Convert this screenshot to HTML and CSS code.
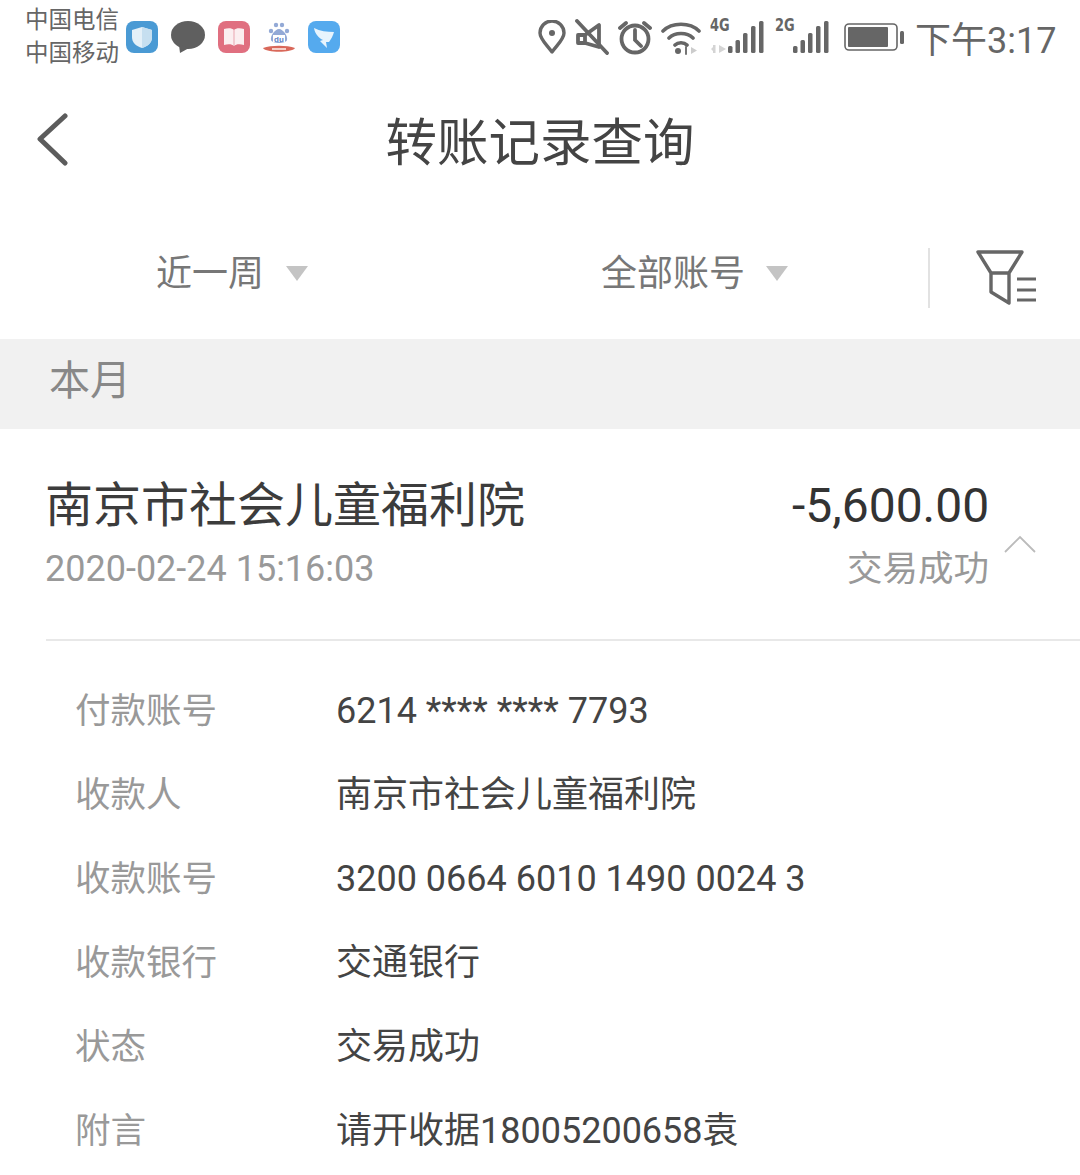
FILE: index.html
```html
<!DOCTYPE html>
<html lang="zh-CN">
<head>
  <meta charset="UTF-8">
  <title>转账记录查询</title>
  <link rel="stylesheet" href="styles.css">
</head>
<body>
  <div class="status-bar">
    <div class="carriers">
      <span>中国电信</span>
      <span>中国移动</span>
    </div>
    <div class="app-icons">
      <svg width="34" height="34" viewBox="0 0 34 34"><rect x="1" y="1" width="32" height="32" rx="8" fill="#4a9ad4"/><path d="M17 7l10 3v7c0 6-4 9-10 11C11 26 7 23 7 17v-7z" fill="#e4f0f8"/><path d="M17 7l10 3v7c0 6-4 9-10 11z" fill="#c6dff0"/></svg>
      <svg width="36" height="34" viewBox="0 0 36 34"><ellipse cx="18" cy="15" rx="17" ry="14" fill="#5f5f5f"/><path d="M9 25l1 8 9-5z" fill="#5f5f5f"/></svg>
      <svg width="34" height="34" viewBox="0 0 34 34"><rect x="1" y="1" width="32" height="32" rx="8" fill="#e06f80"/><path d="M7 9c4-1 8-1 10 1 2-2 6-2 10-1v16c-4-1-8-1-10 1-2-2-6-2-10-1z" fill="#fbeef0"/><path d="M17 10v16" stroke="#e9a5b0" stroke-width="1"/></svg>
      <svg width="34" height="36" viewBox="0 0 34 36"><g fill="#93a9d6"><circle cx="9" cy="12" r="2.200"/><circle cx="14" cy="6" r="2.200"/><circle cx="20" cy="6" r="2.200"/><circle cx="25" cy="12" r="2.200"/><path d="M17 10c4 0 9 7 8 11-1 4-15 4-16 0-1-4 4-11 8-11z"/></g><path d="M11 16h12v7H11z" fill="#fff"/><text class="du" x="17" y="22.500" text-anchor="middle">du</text><path d="M1 29c8-3 24-3 32 0-3 5-29 5-32 0z" fill="#d9685a"/><path d="M10 30h14" stroke="#f6d0c8" stroke-width="2"/></svg>
      <svg width="34" height="34" viewBox="0 0 34 34"><rect x="1" y="1" width="32" height="32" rx="8" fill="#55aaee"/><path d="M7 8c6 3 13 4 20 4-1 4-3 7-5 10h-3l1 6-7-7 3-1c-4-2-8-6-9-12z" fill="#e8f4fd"/></svg>
    </div>
    <div class="sys-icons">
      <svg width="28" height="34" viewBox="0 0 28 34" fill="none" stroke="#666" stroke-width="3.400"><path d="M14 32C8 24 2 19 2 13a12 12 0 0 1 24 0c0 6-6 11-12 19z" stroke-linejoin="round"/><circle cx="14" cy="13" r="3" fill="#666" stroke="none"/></svg>
      <svg width="34" height="36" viewBox="0 0 34 36" fill="none" stroke="#666" stroke-width="3.800"><path d="M3 16h7v8H3zM10 16l14-10v22L10 24" stroke-linejoin="round" fill="none"/><path d="M2 2l30 32" stroke-linecap="round"/></svg>
      <svg width="34" height="36" viewBox="0 0 34 36" fill="none" stroke="#666" stroke-width="3.800"><circle cx="17" cy="20" r="13.500"/><path d="M17 11v10l6 6M2 9l6-5M32 9l-6-5" stroke-linecap="round"/></svg>
      <svg width="40" height="36" viewBox="0 0 40 36" fill="none" stroke="#666" stroke-width="3.600" stroke-linecap="round"><path d="M2 12C11 3 29 3 38 12M8 19c6-6 18-6 24 0M14 26c3-3 9-3 12 0"/><circle cx="17" cy="32" r="3" fill="#666" stroke="none"/><path d="M25 28v7" stroke-width="1.800"/><path d="M30 28l6 3.500-6 3.500z" fill="#ccc" stroke="none"/></svg>
      <div class="signal">
        <span class="net">4G</span>
        <svg class="arrows" width="16" height="8" viewBox="0 0 16 8" fill="#d4d4d4"><rect x="2" y="0" width="2.500" height="8"/><path d="M0 4l3-3v6zM8 0l7 4-7 4z"/></svg>
        <svg width="36" height="34" viewBox="0 0 36 34" fill="#666"><rect x="0" y="26" width="4.500" height="7" rx="1.500"/><rect x="7.500" y="20" width="4.500" height="13" rx="1.500"/><rect x="15" y="13" width="4.500" height="20" rx="1.500"/><rect x="23" y="6" width="4.500" height="27" rx="1.500"/><rect x="31" y="1" width="4.500" height="32" rx="1.500"/></svg>
      </div>
      <div class="signal signal-2g">
        <span class="net">2G</span>
        <svg width="36" height="34" viewBox="0 0 36 34" fill="#666"><rect x="0" y="26" width="4.500" height="7" rx="1.500"/><rect x="7.500" y="20" width="4.500" height="13" rx="1.500"/><rect x="15" y="13" width="4.500" height="20" rx="1.500"/><rect x="23" y="6" width="4.500" height="27" rx="1.500"/><rect x="31" y="1" width="4.500" height="32" rx="1.500"/></svg>
      </div>
      <svg class="battery" width="62" height="30" viewBox="0 0 62 30"><rect x="1" y="2" width="52" height="26" rx="4" fill="none" stroke="#666" stroke-width="1.600"/><rect x="4" y="5" width="40" height="20" rx="1" fill="#666"/><rect x="56" y="9" width="4" height="13" rx="1.500" fill="#666"/></svg>
    </div>
    <div class="clock">下午3:17</div>
  </div>

  <header class="title-bar">
    <svg class="back" width="34" height="54" viewBox="0 0 34 54" fill="none" stroke="#5c5c5c" stroke-width="5" stroke-linecap="round" stroke-linejoin="round"><path d="M30 4L5 27l25 24"/></svg>
    <h1>转账记录查询</h1>
  </header>

  <div class="filters">
    <div class="filter filter-date"><span>近一周</span><i class="caret"></i></div>
    <div class="filter filter-account"><span>全部账号</span><i class="caret"></i></div>
    <div class="filter-btn">
      <svg width="62" height="58" viewBox="0 0 62 58" fill="none" stroke="#666" stroke-width="3.400" stroke-linejoin="round"><path d="M2 3h44L33 24H15zM15 24v19l18 11V24"/><path d="M41 30h19M41 41h19M41 51h19" stroke-width="3"/></svg>
    </div>
  </div>

  <div class="month">本月</div>

  <section class="record">
    <div class="record-head">
      <div class="record-left">
        <div class="payee">南京市社会儿童福利院</div>
        <div class="date">2020-02-24 15:16:03</div>
      </div>
      <div class="record-right">
        <div class="amount">-5,600.00</div>
        <div class="result">交易成功</div>
        <svg class="fold" width="32" height="18" viewBox="0 0 32 18" fill="none" stroke="#bbb" stroke-width="1.800"><path d="M1 17L16 2l15 15"/></svg>
      </div>
    </div>
    <dl class="details">
      <div class="row"><dt>付款账号</dt><dd>6214 **** **** 7793</dd></div>
      <div class="row"><dt>收款人</dt><dd>南京市社会儿童福利院</dd></div>
      <div class="row"><dt>收款账号</dt><dd>3200 0664 6010 1490 0024 3</dd></div>
      <div class="row"><dt>收款银行</dt><dd>交通银行</dd></div>
      <div class="row"><dt>状态</dt><dd>交易成功</dd></div>
      <div class="row"><dt>附言</dt><dd>请开收据18005200658袁</dd></div>
    </dl>
  </section>
</body>
</html>
```

FILE: styles.css
```css
html, body {
  margin: 0;
  padding: 0;
}

body {
  width: 1080px;
  height: 1175px;
  overflow: hidden;
  background-color: #fff;
  color: #333;
  font-family: Roboto, "Noto Sans CJK SC", sans-serif;
}

.status-bar {
  display: flex;
  align-items: center;
  height: 74px;
  padding-left: 25px;
}

.carriers {
  display: flex;
  flex-direction: column;
  font-size: 23.5px;
  line-height: 33px;
  color: #666;
}

.app-icons {
  display: flex;
  align-items: center;
  gap: 11px;
  margin-left: 6px;
}

.du {
  font-family: "Liberation Sans", sans-serif;
  font-size: 8px;
  font-weight: 700;
  fill: #5b7fc4;
}

.sys-icons {
  display: flex;
  align-items: center;
  gap: 9px;
  margin-left: 197px;
}

.signal {
  position: relative;
  width: 54px;
  height: 34px;
  display: flex;
  justify-content: flex-end;
}

.signal-2g {
  margin-left: 2px;
}

.net {
  position: absolute;
  left: 0;
  top: -6px;
  font-family: "DejaVu Sans", sans-serif;
  font-size: 18px;
  font-weight: 700;
  color: #666;
  transform: scaleX(0.72);
  transform-origin: left center;
}

.arrows {
  position: absolute;
  left: 1px;
  bottom: 1px;
}

.battery {
  margin-left: 6px;
}

.clock {
  margin-left: 9px;
  font-size: 36px;
  color: #666;
}

.title-bar {
  position: relative;
  display: flex;
  justify-content: center;
  align-items: center;
  height: 130px;
}

.back {
  position: absolute;
  left: 35px;
  top: 38px;
}

h1 {
  margin: 0 0 2px;
  font-size: 51.5px;
  font-weight: 400;
  color: #444;
}

.filters {
  display: flex;
  align-items: center;
  height: 135px;
}

.filter {
  display: flex;
  align-items: center;
  margin-bottom: 4px;
  font-size: 36px;
  color: #777;
}

.filter-date {
  margin-left: 156px;
  gap: 22px;
}

.filter-account {
  margin-left: 293px;
  gap: 21px;
}

.caret {
  width: 0;
  height: 0;
  margin-top: 8px;
  border-left: 11px solid transparent;
  border-right: 11px solid transparent;
  border-top: 15px solid #c4c4c4;
}

.filter-btn {
  margin-left: 140px;
  margin-top: 12px;
  padding-left: 46px;
  height: 60px;
  display: flex;
  align-items: center;
  border-left: 2px solid #e2e2e2;
}

.month {
  height: 90px;
  padding-left: 49px;
  background-color: #f1f1f1;
  font-size: 41px;
  line-height: 85px;
  color: #888;
}

.record {
  padding-left: 46px;
}

.record-head {
  display: flex;
  justify-content: space-between;
  height: 212px;
  border-bottom: 2px solid #e8e8e8;
  box-sizing: border-box;
}

.record-left {
  margin-left: -1px;
}

.payee {
  margin-top: 44px;
  font-size: 48px;
  line-height: 66px;
  color: #3c3c3c;
}

.date {
  margin-top: 9px;
  font-size: 36px;
  line-height: 42px;
  color: #999;
}

.record-right {
  position: relative;
  width: 288px;
  padding-right: 91px;
  text-align: right;
  box-sizing: border-box;
}

.amount {
  margin-top: 47px;
  font-size: 48px;
  line-height: 60px;
  color: #333;
}

.result {
  margin-top: 9px;
  font-size: 35.5px;
  line-height: 48px;
  color: #999;
}

.fold {
  position: absolute;
  right: 44px;
  top: 106px;
}

.details {
  margin: 28px 0 0 29px;
}

.row {
  display: flex;
  align-items: center;
  height: 84px;
  line-height: 44px;
}

dt {
  width: 261px;
  font-size: 35.5px;
  color: #999;
}

dd {
  margin: 0;
  font-size: 36px;
  color: #444;
}
```
